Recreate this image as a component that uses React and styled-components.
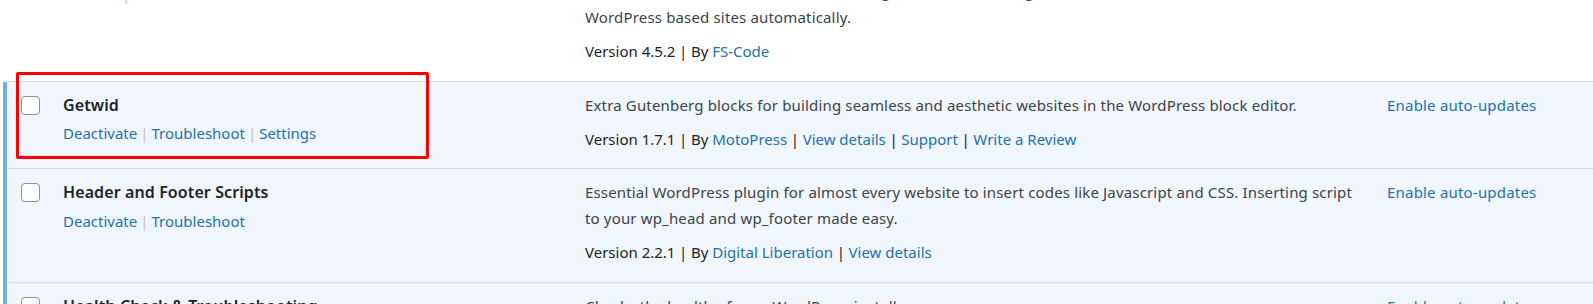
import React from 'react'
import styled, { createGlobalStyle } from 'styled-components'

const GlobalStyle = createGlobalStyle`
	html, body {
		margin: 0;
		padding: 0;
		overflow: hidden;
		background: #ffffff;
	}
	body {
		font-family: "Noto Sans", "Open Sans", sans-serif;
		font-size: 15px;
		color: #1d2327;
	}
`

const plugins = [
	{
		name: 'FS Poster',
		active: false,
		actions: ['Activate', 'Delete'],
		description: [
			'FS Poster gives you a great opportunity to auto-publish WordPress posts on Facebook, Instagram,',
			'Twitter, Pinterest, Reddit, Tumblr, VK, Telegram, Medium, Google Business Profile and other',
			'WordPress based sites automatically.',
		],
		version: '4.5.2',
		author: 'FS-Code',
		links: [],
		autoUpdates: false,
	},
	{
		name: 'Getwid',
		active: true,
		actions: ['Deactivate', 'Troubleshoot', 'Settings'],
		description: [
			'Extra Gutenberg blocks for building seamless and aesthetic websites in the WordPress block editor.',
		],
		version: '1.7.1',
		author: 'MotoPress',
		links: ['View details', 'Support', 'Write a Review'],
		autoUpdates: true,
	},
	{
		name: 'Header and Footer Scripts',
		active: true,
		actions: ['Deactivate', 'Troubleshoot'],
		description: [
			'Essential WordPress plugin for almost every website to insert codes like Javascript and CSS. Inserting script to your wp_head and wp_footer made easy.',
		],
		version: '2.2.1',
		author: 'Digital Liberation',
		links: ['View details'],
		autoUpdates: true,
	},
	{
		name: 'Health Check & Troubleshooting',
		active: true,
		actions: ['Deactivate', 'Troubleshoot'],
		description: ['Checks the health of your WordPress install.'],
		version: '1.7.1',
		author: 'The WordPress.org community',
		links: ['View details'],
		autoUpdates: true,
	},
]

const Page = styled.div`
	position: relative;
	display: flow-root;
	padding-left: 3px;
`

const Table = styled.table`
	width: 100%;
	margin-top: -57px;
	border-collapse: collapse;
	table-layout: fixed;
	border-left: 1px solid #dcdcde;
`

const Row = styled.tr`
	background: ${({ $active }) => ($active ? '#f0f6fc' : '#ffffff')};

	& > td {
		border-bottom: 1px solid #dcdcde;
		vertical-align: top;
		padding: 11px 10px;
		line-height: 25.4px;
	}
`

const CheckCell = styled.td`
	&& {
		border-left: 4px solid ${({ $active }) => ($active ? '#72aee6' : 'transparent')};
		padding: 11px 0 11px 14px;
	}
`

const Checkbox = styled.input.attrs({ type: 'checkbox' })`
	appearance: none;
	display: block;
	width: 19px;
	height: 19px;
	margin: 3px 0 0;
	border: 1px solid #8c8f94;
	border-radius: 4px;
	background: #ffffff;
	box-sizing: border-box;
`

const Title = styled.strong`
	display: block;
	font-size: 16px;
	font-weight: 600;
	letter-spacing: 0.1px;
	color: #1d2327;
`

const Actions = styled.div`
	margin-top: 3px;
	color: #a7aaad;
`

const Link = styled.a`
	color: ${({ $danger }) => ($danger ? '#b32d2e' : '#2271b1')};
	text-decoration: none;
`

const Sep = styled.span`
	margin: 0 ${({ $light }) => ($light ? '3px' : '3.6px')};
	color: ${({ $light }) => ($light ? '#c3c4c7' : 'inherit')};
`

const Desc = styled.p`
	margin: 0;
	color: #3c434a;
	letter-spacing: 0.16px;
`

const Meta = styled.div`
	margin: 9px 0 5px;
	color: #1d2327;
`

const AutoLink = styled(Link)`
	letter-spacing: 0.2px;
`

const Highlight = styled.div`
	position: absolute;
	left: 16px;
	top: 72px;
	width: 413px;
	height: 87px;
	box-sizing: border-box;
	border: 3px solid #ff0000;
	border-radius: 2px;
	pointer-events: none;
`

const PluginRow = ({ plugin }) => (
	<Row $active={plugin.active}>
		<CheckCell $active={plugin.active}>
			<Checkbox aria-label={`Select ${plugin.name}`} />
		</CheckCell>
		<td>
			<Title>{plugin.name}</Title>
			<Actions>
				{plugin.actions.map((a, i) => (
					<React.Fragment key={a}>
						{i > 0 && <Sep $light>|</Sep>}
						<Link href="#" $danger={a === 'Delete'}>
							{a}
						</Link>
					</React.Fragment>
				))}
			</Actions>
		</td>
		<td>
			<Desc>
				{plugin.description.map((line, i) => (
					<React.Fragment key={i}>
						{i > 0 && <br />}
						{line}
					</React.Fragment>
				))}
			</Desc>
			<Meta>
				Version {plugin.version}
				<Sep>|</Sep>By <Link href="#">{plugin.author}</Link>
				{plugin.links.map((l) => (
					<React.Fragment key={l}>
						<Sep>|</Sep>
						<Link href="#">{l}</Link>
					</React.Fragment>
				))}
			</Meta>
		</td>
		<td>{plugin.autoUpdates && <AutoLink href="#">Enable auto-updates</AutoLink>}</td>
	</Row>
)

export default function App() {
	return (
		<Page>
			<GlobalStyle />
			<Table>
				<colgroup>
					<col style={{ width: 48 }} />
					<col style={{ width: 522 }} />
					<col style={{ width: 802 }} />
					<col />
				</colgroup>
				<tbody>
					{plugins.map((p) => (
						<PluginRow key={p.name} plugin={p} />
					))}
				</tbody>
			</Table>
			<Highlight />
		</Page>
	)
}
